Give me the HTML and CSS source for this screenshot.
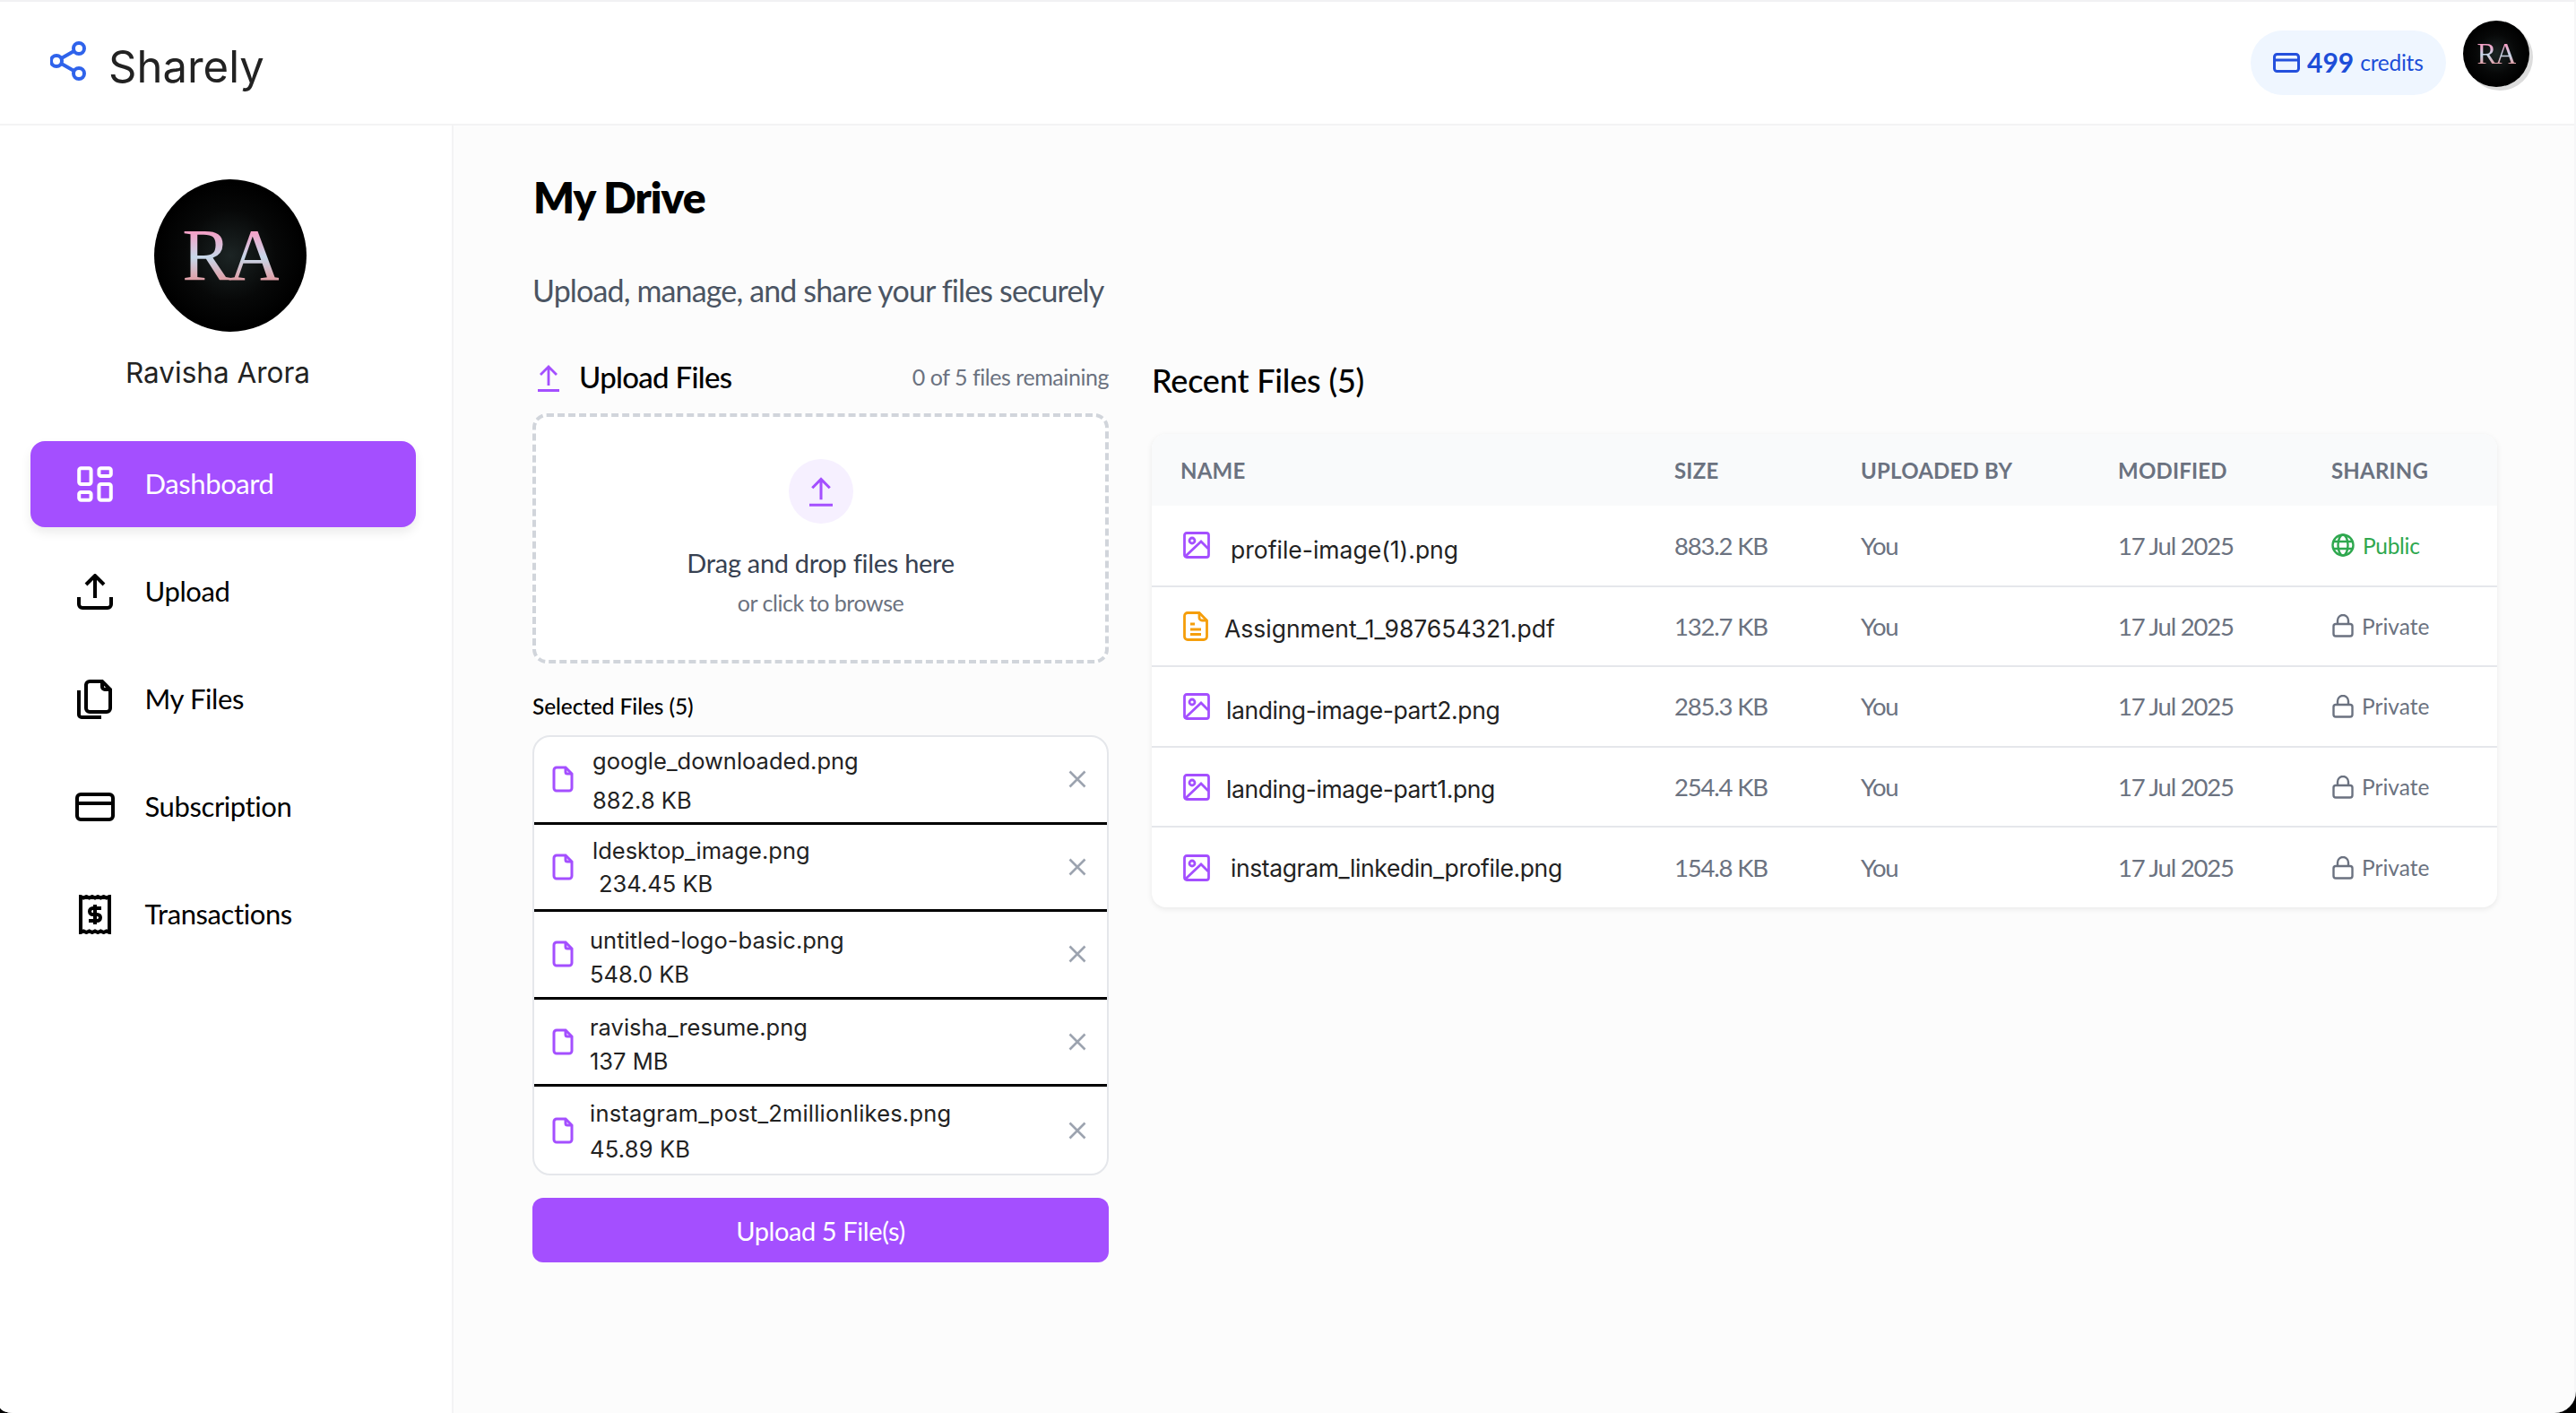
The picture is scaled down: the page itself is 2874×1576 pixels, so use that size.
FILE: index.html
```html
<!DOCTYPE html>
<html lang="en">
<head>
    <meta charset="UTF-8">
    <meta name="viewport" content="width=device-width, initial-scale=1.0">
    <title>Sharely - My Drive</title>
    <link rel="stylesheet" href="styles.css">
</head>
<body>
    <svg class="sprites" width="0" height="0" aria-hidden="true">
        <symbol id="i-doc" viewBox="0 0 24 30">
            <path d="M5 2h10l7 7v16a3 3 0 0 1-3 3H5a3 3 0 0 1-3-3V5a3 3 0 0 1 3-3z"/>
            <path d="M15 2v5a2 2 0 0 0 2 2h5"/>
        </symbol>
        <symbol id="i-image" viewBox="0 0 30 30">
            <rect x="1.500" y="1.500" width="27" height="27" rx="2.500"/>
            <circle cx="10" cy="10" r="3"/>
            <path d="M3 27l17-16 8 8"/>
        </symbol>
        <symbol id="i-lock" viewBox="0 0 24 26">
            <rect x="1.500" y="11" width="21" height="13.500" rx="2.500"/>
            <path d="M6 11V7a6 6 0 0 1 12 0v4"/>
        </symbol>
        <symbol id="i-x" viewBox="0 0 20 20">
            <path d="M1.500 1.500l17 17M18.500 1.500l-17 17"/>
        </symbol>
    </svg>

    <header class="topbar">
        <div class="brand">
            <svg class="brand-icon" width="40" height="44" viewBox="0 0 40 44">
                <circle cx="32" cy="8" r="6"/>
                <circle cx="7" cy="22" r="6"/>
                <circle cx="32" cy="36" r="6"/>
                <path d="M12.500 19L26.500 11M12.500 25l14 8"/>
            </svg>
            <span class="brand-name">Sharely</span>
        </div>
        <div class="topbar-right">
            <div class="credits">
                <svg class="credits-icon" width="30" height="22" viewBox="0 0 30 22">
                    <rect x="1.500" y="1.500" width="27" height="19" rx="3"/>
                    <path d="M1.500 8h27"/>
                </svg>
                <span class="credits-num">499</span>
                <span class="credits-label">credits</span>
            </div>
            <div class="avatar avatar-small"><span>RA</span></div>
        </div>
    </header>

    <div class="layout">
        <aside class="sidebar">
            <div class="avatar avatar-big"><span>RA</span></div>
            <div class="profile-name">Ravisha Arora</div>
            <nav class="nav">
                <a class="nav-item active">
                    <svg class="nav-icon" width="40" height="40" viewBox="3 3 18 18">
                        <rect x="4" y="4" width="6" height="8" rx="1"/>
                        <rect x="4" y="16" width="6" height="4" rx="1"/>
                        <rect x="14" y="12" width="6" height="8" rx="1"/>
                        <rect x="14" y="4" width="6" height="4" rx="1"/>
                    </svg>
                    <span>Dashboard</span>
                </a>
                <a class="nav-item">
                    <svg class="nav-icon" width="40" height="40" viewBox="0 0 40 40">
                        <path d="M2 26v8a4 4 0 0 0 4 4h28a4 4 0 0 0 4-4v-8"/>
                        <path d="M20 27V3M10 12l10-10 10 10"/>
                    </svg>
                    <span>Upload</span>
                </a>
                <a class="nav-item">
                    <svg class="nav-icon" width="40" height="44" viewBox="0 0 40 44">
                        <path d="M14 2h14l9 9v21a4 4 0 0 1-4 4H14a4 4 0 0 1-4-4V6a4 4 0 0 1 4-4z"/>
                        <path d="M28 2v6a3 3 0 0 0 3 3h6"/>
                        <path d="M2 12v27a3 3 0 0 0 3 3h22"/>
                    </svg>
                    <span>My Files</span>
                </a>
                <a class="nav-item">
                    <svg class="nav-icon" width="44" height="32" viewBox="0 0 44 32">
                        <rect x="2" y="2" width="40" height="28" rx="4"/>
                        <path d="M2 12h40"/>
                    </svg>
                    <span>Subscription</span>
                </a>
                <a class="nav-item">
                    <svg class="nav-icon" width="36" height="44" viewBox="0 0 36 44">
                        <path d="M2 2l3.200 1.600L8.400 2l3.200 1.600L14.800 2 18 3.600 21.200 2l3.200 1.600L27.600 2l3.200 1.600L34 2v40l-3.200-1.600-3.200 1.600-3.200-1.600-3.200 1.600L18 40.400 14.800 42l-3.200-1.600L8.400 42l-3.200-1.600L2 42z"/>
                        <path d="M25 15h-9.500a3.500 3.500 0 0 0 0 7h5a3.500 3.500 0 0 1 0 7H11M18 11v22"/>
                    </svg>
                    <span>Transactions</span>
                </a>
            </nav>
        </aside>

        <main class="content">
            <h1>My Drive</h1>
            <p class="subtitle">Upload, manage, and share your files securely</p>

            <div class="columns">
                <section class="upload-col">
                    <div class="upload-head">
                        <svg class="upload-arrow" width="24" height="31" viewBox="0 0 24 31">
                            <path d="M12 3v21M3 12l9-9 9 9M0 29.500h24"/>
                        </svg>
                        <h2 class="upload-title">Upload Files</h2>
                        <span class="remaining">0 of 5 files remaining</span>
                    </div>

                    <div class="dropzone">
                        <div class="drop-circle">
                            <svg class="upload-arrow" width="26" height="34" viewBox="0 0 24 31">
                                <path d="M12 3v21M3 12l9-9 9 9M0 29.500h24"/>
                            </svg>
                        </div>
                        <p class="drop-main">Drag and drop files here</p>
                        <p class="drop-sub">or click to browse</p>
                    </div>

                    <h3 class="selected-title">Selected Files (5)</h3>
                    <ul class="selected-list">
                        <li class="selected-row row-google">
                            <svg class="sel-icon" width="24" height="30"><use href="#i-doc"/></svg>
                            <div class="sel-text">
                                <span>google_downloaded.png</span>
                                <span>882.8 KB</span>
                            </div>
                            <svg class="sel-x" width="20" height="20"><use href="#i-x"/></svg>
                        </li>
                        <li class="selected-row row-desktop">
                            <svg class="sel-icon" width="24" height="30"><use href="#i-doc"/></svg>
                            <div class="sel-text">
                                <span>ldesktop_image.png</span>
                                <span class="sel-indent">234.45 KB</span>
                            </div>
                            <svg class="sel-x" width="20" height="20"><use href="#i-x"/></svg>
                        </li>
                        <li class="selected-row row-logo">
                            <svg class="sel-icon" width="24" height="30"><use href="#i-doc"/></svg>
                            <div class="sel-text">
                                <span>untitled-logo-basic.png</span>
                                <span>548.0 KB</span>
                            </div>
                            <svg class="sel-x" width="20" height="20"><use href="#i-x"/></svg>
                        </li>
                        <li class="selected-row row-resume">
                            <svg class="sel-icon" width="24" height="30"><use href="#i-doc"/></svg>
                            <div class="sel-text">
                                <span>ravisha_resume.png</span>
                                <span>137 MB</span>
                            </div>
                            <svg class="sel-x" width="20" height="20"><use href="#i-x"/></svg>
                        </li>
                        <li class="selected-row row-insta">
                            <svg class="sel-icon" width="24" height="30"><use href="#i-doc"/></svg>
                            <div class="sel-text">
                                <span>instagram_post_2millionlikes.png</span>
                                <span>45.89 KB</span>
                            </div>
                            <svg class="sel-x" width="20" height="20"><use href="#i-x"/></svg>
                        </li>
                    </ul>
                    <button class="upload-btn">Upload 5 File(s)</button>
                </section>

                <section class="recent-col">
                    <h2 class="recent-title">Recent Files (5)</h2>
                    <div class="table-card">
                        <table>
                            <thead>
                                <tr>
                                    <th class="col-name">Name</th>
                                    <th class="col-size">Size</th>
                                    <th class="col-by">Uploaded by</th>
                                    <th class="col-mod">Modified</th>
                                    <th>Sharing</th>
                                </tr>
                            </thead>
                            <tbody>
                                <tr>
                                    <td><div class="file-name wide low"><svg class="img-icon" width="30" height="30"><use href="#i-image"/></svg><span>profile-image(1).png</span></div></td>
                                    <td>883.2 KB</td>
                                    <td>You</td>
                                    <td>17 Jul 2025</td>
                                    <td><div class="share public">
                                        <svg width="26" height="26" viewBox="0 0 26 26">
                                            <circle cx="13" cy="13" r="11.500"/>
                                            <ellipse cx="13" cy="13" rx="5.500" ry="11.500"/>
                                            <path d="M2.500 9h21M2.500 17h21"/>
                                        </svg>
                                        <span>Public</span>
                                    </div></td>
                                </tr>
                                <tr>
                                    <td><div class="file-name low-sm">
                                        <svg class="pdf-icon" width="28" height="33" viewBox="0 0 28 33">
                                            <path d="M5 1.500h13l8.500 8.500v18a3.500 3.500 0 0 1-3.500 3.500H5A3.500 3.500 0 0 1 1.500 28V5A3.500 3.500 0 0 1 5 1.500z"/>
                                            <path d="M18 1.500V7a3 3 0 0 0 3 3h5.500M8 14h5M8 20h12M8 25.500h12"/>
                                        </svg>
                                        <span>Assignment_1_987654321.pdf</span>
                                    </div></td>
                                    <td>132.7 KB</td>
                                    <td>You</td>
                                    <td>17 Jul 2025</td>
                                    <td><div class="share"><svg width="24" height="26"><use href="#i-lock"/></svg><span>Private</span></div></td>
                                </tr>
                                <tr>
                                    <td><div class="file-name low tight"><svg class="img-icon" width="30" height="30"><use href="#i-image"/></svg><span>landing-image-part2.png</span></div></td>
                                    <td>285.3 KB</td>
                                    <td>You</td>
                                    <td>17 Jul 2025</td>
                                    <td><div class="share"><svg width="24" height="26"><use href="#i-lock"/></svg><span>Private</span></div></td>
                                </tr>
                                <tr>
                                    <td><div class="file-name low-sm tight"><svg class="img-icon" width="30" height="30"><use href="#i-image"/></svg><span>landing-image-part1.png</span></div></td>
                                    <td>254.4 KB</td>
                                    <td>You</td>
                                    <td>17 Jul 2025</td>
                                    <td><div class="share"><svg width="24" height="26"><use href="#i-lock"/></svg><span>Private</span></div></td>
                                </tr>
                                <tr>
                                    <td><div class="file-name wide tight"><svg class="img-icon" width="30" height="30"><use href="#i-image"/></svg><span>instagram_linkedin_profile.png</span></div></td>
                                    <td>154.8 KB</td>
                                    <td>You</td>
                                    <td>17 Jul 2025</td>
                                    <td><div class="share"><svg width="24" height="26"><use href="#i-lock"/></svg><span>Private</span></div></td>
                                </tr>
                            </tbody>
                        </table>
                    </div>
                </section>
            </div>
        </main>
    </div>
</body>
</html>
```

FILE: styles.css
```css
* {
    box-sizing: border-box;
}
html {
    height: 100%;
    background: #000;
}
body {
    height: 100%;
    margin: 0;
    display: flex;
    flex-direction: column;
    overflow: hidden;
    font-family: "Lato", sans-serif;
    color: #000;
    background: #fcfcfc;
    border-top: 2px solid #f1f1f3;
    border-right: 2px solid #f6f6f7;
    border-bottom-right-radius: 24px;
    border-bottom-left-radius: 15px 7px;
}
h1, h2, h3, p, ul {
    margin: 0;
    padding: 0;
}
svg {
    display: block;
    flex-shrink: 0;
    fill: none;
}
.sprites {
    position: absolute;
}

/* top bar */
.topbar {
    height: 138px;
    flex-shrink: 0;
    display: flex;
    align-items: center;
    justify-content: space-between;
    padding: 0 50px 0 56px;
    background: #fff;
    border-bottom: 2px solid #f3f3f4;
}
.brand {
    display: flex;
    align-items: center;
    gap: 25px;
}
.brand-icon {
    stroke: #2f63eb;
    stroke-width: 4;
    margin-top: -4px;
}
.brand-name {
    font-family: "Inter", sans-serif;
    font-size: 49px;
    color: #222;
    line-height: 56px;
    margin-top: 10px;
}
.topbar-right {
    align-self: flex-start;
    display: flex;
    align-items: flex-start;
    gap: 19px;
}
.credits {
    width: 218px;
    height: 72px;
    margin-top: 32px;
    padding-left: 25px;
    display: flex;
    align-items: center;
    border-radius: 36px;
    background: #eff6ff;
    color: #1d4ed8;
}
.credits-icon {
    stroke: #2450dd;
    stroke-width: 3;
}
.credits-num {
    margin-left: 8px;
    padding-bottom: 2px;
    font-size: 30px;
    font-weight: 700;
}
.credits-label {
    margin-left: 7px;
    padding-bottom: 2px;
    font-size: 24.500px;
    letter-spacing: -0.25px;
}
.avatar {
    display: flex;
    align-items: center;
    justify-content: center;
    border-radius: 50%;
    background: radial-gradient(circle, #1c2424 0%, #070808 42%, #000 68%);
    font-family: "Liberation Serif", serif;
}
.avatar span {
    background: linear-gradient(180deg, #f4a0c6 22%, #c6d8ea 52%, #e0a0a8 78%);
    -webkit-background-clip: text;
    background-clip: text;
    color: transparent;
    filter: blur(0.7px);
    letter-spacing: -0.04em;
}
.avatar-small {
    width: 74px;
    height: 74px;
    margin-top: 21px;
    font-size: 33px;
    box-shadow: 4px 4px 0 #dcdcdc;
}
.avatar-big {
    width: 170px;
    height: 170px;
    margin-left: 172px;
    font-size: 82px;
}

.layout {
    flex: 1;
    display: flex;
    min-height: 0;
}

/* sidebar */
.sidebar {
    width: 506px;
    flex-shrink: 0;
    padding-top: 60px;
    background: #fff;
    border-right: 2px solid #f3f3f4;
}
.profile-name {
    margin: 26px 0 0 140px;
    font-family: "Inter", sans-serif;
    font-size: 31.500px;
    line-height: 40px;
    color: #222;
}
.nav {
    margin: 56px 0 0 34px;
    width: 430px;
    display: flex;
    flex-direction: column;
    gap: 24px;
}
.nav-item {
    height: 96px;
    display: grid;
    grid-template-columns: 44px 1fr;
    column-gap: 33.500px;
    align-items: center;
    justify-items: center;
    padding-left: 50px;
    border-radius: 16px;
    font-size: 31px;
    letter-spacing: -0.4px;
    color: #000;
}
.nav-item span {
    justify-self: start;
    padding-bottom: 3px;
}
.nav-icon {
    stroke: currentColor;
    stroke-width: 4;
}
.nav-item:first-child .nav-icon {
    stroke-width: 1.800;
}
.nav-item.active {
    background: #a44fff;
    color: #fff;
    box-shadow: 0 6px 12px rgba(0, 0, 0, 0.08);
}

/* main area */
.content {
    flex: 1;
    min-width: 0;
    padding: 56px 86px 0 88px;
}
h1 {
    font-size: 48px;
    line-height: 48px;
    font-weight: 800;
    letter-spacing: -1px;
    padding-left: 1px;
}
.subtitle {
    margin-top: 58px;
    font-size: 34px;
    line-height: 44px;
    letter-spacing: -0.85px;
    color: #4b5563;
}
.columns {
    margin-top: 54px;
    display: flex;
    gap: 48px;
}
.upload-col {
    width: 643px;
    flex-shrink: 0;
}
.recent-col {
    flex: 1;
    min-width: 0;
}
.upload-head {
    height: 42px;
    display: flex;
    align-items: center;
    padding-left: 6px;
}
.upload-arrow {
    stroke: #a44fff;
    stroke-width: 2.800;
}
.upload-title {
    margin-left: 22px;
    padding-bottom: 2px;
    font-size: 33px;
    font-weight: 500;
    letter-spacing: -0.7px;
}
.remaining {
    margin-left: auto;
    padding-bottom: 2px;
    font-size: 25px;
    letter-spacing: -0.45px;
    color: #6b7280;
}
.dropzone {
    margin-top: 19px;
    height: 279px;
    padding-top: 47px;
    display: flex;
    flex-direction: column;
    align-items: center;
    background: #fff;
    border: 4px dashed #d1d5db;
    border-radius: 16px;
}
.drop-circle {
    width: 72px;
    height: 72px;
    display: flex;
    align-items: center;
    justify-content: center;
    border-radius: 50%;
    background: #f6f0ff;
}
.drop-main {
    margin-top: 24px;
    font-size: 29px;
    line-height: 40px;
    letter-spacing: -0.3px;
    color: #374151;
}
.drop-sub {
    margin-top: 8px;
    font-size: 25px;
    line-height: 32px;
    letter-spacing: -0.45px;
    color: #6b7280;
}
.selected-title {
    margin-top: 34px;
    font-size: 24.500px;
    line-height: 28px;
    font-weight: 500;
    letter-spacing: -0.1px;
}
.selected-list {
    margin-top: 18px;
    height: 491px;
    list-style: none;
    background: #fff;
    border: 2px solid #e5e7eb;
    border-radius: 20px;
    overflow: hidden;
}
.selected-row {
    height: 97.500px;
    display: flex;
    align-items: center;
    padding: 0 23px 0 20px;
    border-bottom: 3px solid #000;
}
.selected-row:last-child {
    border-bottom: none;
}
.sel-icon {
    stroke: #a44fff;
    stroke-width: 3;
}
.sel-text {
    flex: 1;
    margin-left: 18px;
    display: flex;
    flex-direction: column;
    gap: 6px;
    font-family: "Inter", sans-serif;
    font-size: 25.500px;
    line-height: 32px;
    color: #222;
}
/* the rows don't line up with each other in the design */
.row-google .sel-text {
    margin-left: 21px;
    padding-top: 4px;
    gap: 12px;
}
.row-desktop .sel-text {
    margin-left: 21px;
    padding-top: 1px;
    gap: 5px;
}
.row-logo .sel-text {
    padding-top: 8px;
}
.row-resume .sel-text {
    padding-top: 6px;
}
.row-insta .sel-text {
    padding-top: 3px;
    gap: 8px;
    letter-spacing: 0.2px;
}
.sel-indent {
    margin-left: 7px;
}
.sel-x {
    stroke: #9ca3af;
    stroke-width: 2.600;
}
.upload-btn {
    display: block;
    width: 100%;
    height: 72px;
    margin-top: 25px;
    border: none;
    border-radius: 12px;
    background: #a44fff;
    color: #fff;
    font-family: inherit;
    font-size: 29px;
    letter-spacing: -0.4px;
}
.recent-title {
    height: 48px;
    font-size: 36px;
    line-height: 48px;
    font-weight: 500;
    letter-spacing: -0.2px;
}

/* recent files table */
.table-card {
    margin-top: 36px;
    background: #fff;
    border-radius: 16px;
    box-shadow: 0 2px 6px rgba(0, 0, 0, 0.08);
    overflow: hidden;
}
table {
    width: 100%;
    table-layout: fixed;
    border-collapse: collapse;
}
th {
    height: 80px;
    padding: 0 0 0 32px;
    background: #f9fafb;
    text-align: left;
    font-size: 24px;
    font-weight: 700;
    letter-spacing: 0.2px;
    text-transform: uppercase;
    color: #6b7280;
}
.col-name { width: 551px; }
.col-size { width: 208px; }
.col-by { width: 287px; }
.col-mod { width: 238px; }
td {
    height: 89.600px;
    padding: 0 0 0 32px;
    font-size: 27.500px;
    letter-spacing: -1.2px;
    color: #6b7280;
    border-top: 2px solid #e5e7eb;
}
tbody tr:first-child td {
    border-top: none;
}
.file-name {
    display: flex;
    align-items: center;
    gap: 18px;
    font-family: "Inter", sans-serif;
    font-size: 26.500px;
    letter-spacing: 0;
    color: #222;
    padding-left: 3px;
}
.file-name.wide {
    gap: 23px;
}
.file-name.tight span {
    letter-spacing: -0.4px;
}
.file-name.low span {
    padding-top: 9px;
}
.file-name.low-sm span {
    padding-top: 5px;
}
.img-icon {
    stroke: #a44fff;
    stroke-width: 2.800;
}
.pdf-icon {
    stroke: #f59e0b;
    stroke-width: 2.800;
}
.share {
    display: flex;
    align-items: center;
    gap: 9px;
    padding-left: 1px;
    font-size: 24.500px;
    letter-spacing: 0;
    color: #6b7280;
    stroke: #6b7280;
}
.share svg {
    stroke-width: 2.400;
}
.share.public {
    padding-left: 0;
    letter-spacing: -0.3px;
    color: #2fa84f;
    stroke: #2fa84f;
}
```
